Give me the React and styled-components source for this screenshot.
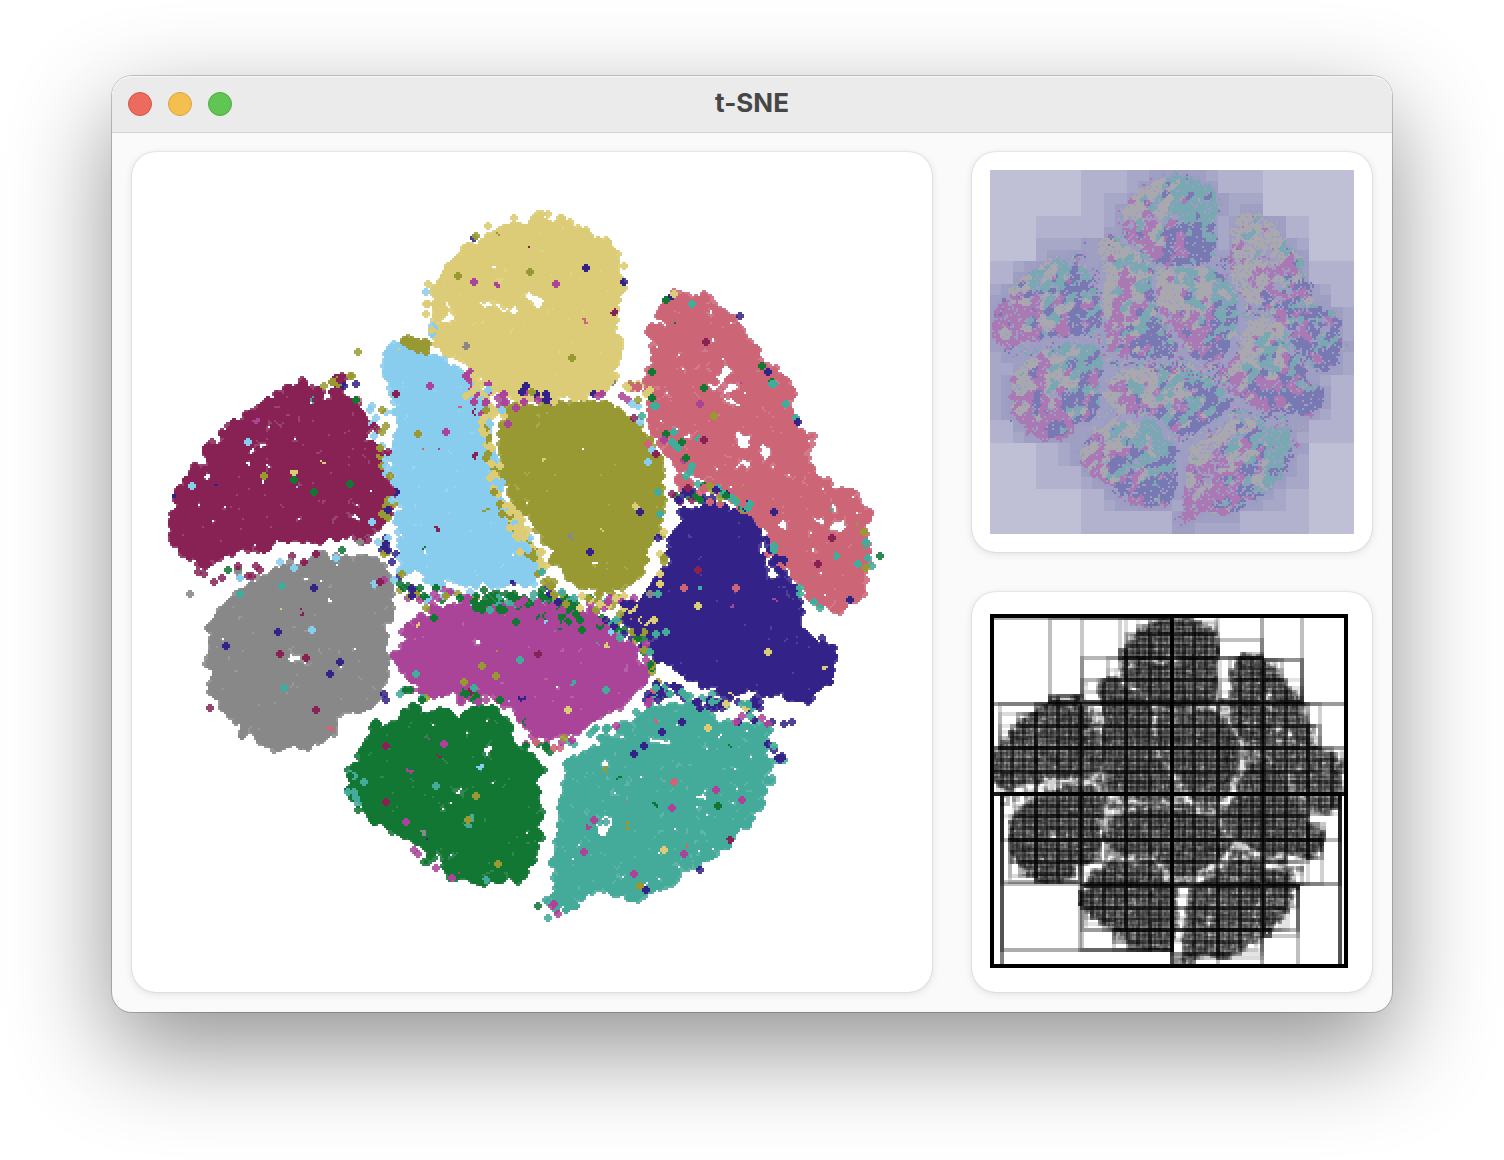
import React from "react";
import styled, { createGlobalStyle } from "styled-components";

/* ---------- data ---------- */

const COLORS = {
  sand: "#ddcc77",
  sky: "#88ccee",
  olive: "#999933",
  rose: "#cc6677",
  wine: "#882255",
  grey: "#888888",
  purple: "#aa4499",
  green: "#117733",
  indigo: "#332288",
  teal: "#44aa99",
};
const SOFT = {
  sand: "#e1d183",
  sky: "#99d3f0",
  olive: "#a8a850",
  rose: "#d27a89",
  wine: "#984370",
  grey: "#979797",
  purple: "#b55fa7",
  green: "#308850",
  indigo: "#4f4098",
  teal: "#5bb4a5",
};

// Cluster outlines, samples per square unit, and sparse spots [x, y, rx, ry].
const CLUSTERS = [
  { name: "grey", density: 0.14, outline: [[212, 620], [240, 590], [260, 575], [300, 566], [335, 552], [370, 560], [392, 575], [392, 610], [384, 640], [384, 690], [365, 708], [345, 715], [330, 740], [290, 752], [260, 742], [228, 720], [212, 690], [208, 650]], holes: [[296, 663, 10, 1]] },
  { name: "wine", density: 0.12, outline: [[170, 525], [178, 490], [205, 455], [235, 420], [270, 400], [300, 382], [320, 393], [335, 395], [338, 375], [344, 375], [345, 395], [360, 405], [368, 440], [385, 465], [397, 495], [388, 510], [380, 528], [360, 538], [330, 543], [310, 540], [270, 548], [240, 548], [215, 558], [205, 572], [185, 563], [172, 545]], holes: [[208, 463, 3, 2], [260, 447, 3, 1]] },
  { name: "olive", density: 0.14, outline: [[500, 408], [540, 402], [580, 404], [610, 402], [640, 430], [655, 450], [662, 480], [660, 520], [650, 560], [630, 585], [605, 592], [575, 582], [552, 560], [545, 530], [520, 510], [500, 480], [500, 440]], holes: [] },
  { name: "sand", density: 0.14, outline: [[448, 264], [462, 250], [490, 234], [508, 222], [540, 216], [565, 220], [580, 230], [610, 247], [620, 267], [622, 300], [618, 335], [622, 350], [612, 365], [616, 380], [598, 392], [570, 396], [535, 400], [500, 396], [485, 380], [470, 363], [445, 353], [432, 330], [436, 300]], holes: [[502, 306, 18, 1], [536, 300, 5, 2], [449, 305, 1, 5], [452, 316, 3, 2]] },
  { name: "sky", density: 0.14, outline: [[385, 362], [398, 346], [420, 348], [445, 368], [470, 370], [482, 400], [488, 420], [492, 470], [502, 500], [520, 530], [536, 560], [540, 580], [510, 586], [470, 584], [425, 580], [402, 570], [398, 540], [400, 500], [397, 450], [392, 400]], holes: [] },
  { name: "teal", density: 0.105, outline: [[567, 760], [610, 740], [640, 715], [670, 705], [700, 705], [725, 722], [765, 725], [772, 770], [760, 810], [730, 840], [700, 862], [670, 880], [640, 896], [600, 892], [575, 908], [552, 912], [550, 890], [558, 850], [564, 800]], holes: [[606, 766, 4, 2], [602, 815, 7, 1], [606, 828, 6, 1], [660, 742, 9, 1]] },
  { name: "green", density: 0.125, outline: [[345, 770], [380, 725], [410, 710], [450, 712], [485, 705], [505, 715], [518, 745], [542, 765], [543, 800], [538, 840], [525, 872], [495, 886], [455, 875], [435, 853], [405, 843], [375, 820], [358, 800]], holes: [[488, 745, 1, 4], [460, 790, 2, 1]] },
  { name: "purple", density: 0.14, outline: [[395, 655], [405, 635], [425, 612], [460, 604], [500, 605], [560, 608], [600, 622], [635, 645], [648, 672], [638, 690], [610, 712], [580, 730], [555, 738], [530, 728], [510, 705], [480, 695], [460, 698], [425, 688], [402, 675]], holes: [] },
  { name: "indigo", density: 0.14, outline: [[680, 515], [715, 502], [745, 515], [758, 540], [768, 575], [790, 597], [800, 627], [820, 637], [838, 650], [834, 685], [810, 702], [770, 698], [725, 690], [690, 680], [660, 660], [640, 630], [622, 618], [645, 595], [665, 570], [672, 545]], holes: [] },
  { name: "rose", density: 0.108, outline: [[672, 295], [680, 288], [705, 295], [730, 315], [752, 345], [775, 365], [793, 395], [800, 430], [812, 435], [805, 465], [822, 484], [850, 488], [866, 505], [869, 540], [866, 580], [850, 605], [832, 617], [818, 605], [800, 585], [785, 560], [765, 535], [745, 510], [722, 490], [700, 478], [680, 470], [658, 440], [648, 410], [645, 370], [652, 330]], holes: [[723, 372, 4, 9], [738, 390, 7, 2], [712, 384, 6, 1], [766, 451, 2, 7], [741, 438, 1, 7], [730, 404, 2, 2], [744, 464, 7, 1], [824, 520, 4, 3], [833, 505, 1, 6], [840, 526, 4, 2], [788, 475, 5, 1], [782, 523, 3, 3]] },
];

// Loose points along the gaps: [x1, y1, x2, y2, count, spread, colours]
const STRAYS = [
  [405, 340, 430, 348, 40, 5, ["olive"]],
  [428, 285, 426, 320, 5, 3, ["sand", "sky"]],
  [430, 325, 440, 345, 10, 6, ["sand", "sky"]],
  [470, 375, 500, 420, 50, 12, ["sand", "sand", "purple", "sky", "sand"]],
  [500, 400, 625, 395, 24, 8, ["purple", "olive", "sand", "purple", "indigo"]],
  [482, 410, 500, 510, 50, 6, ["sand", "sky", "olive", "sand"]],
  [505, 505, 545, 575, 65, 8, ["sand", "sky", "olive", "sand"]],
  [626, 385, 648, 392, 14, 5, ["rose", "sand", "rose", "olive"]],
  [634, 402, 655, 470, 14, 9, ["rose", "sky", "wine", "olive", "teal"]],
  [312, 386, 358, 378, 10, 6, ["olive", "indigo", "olive"]],
  [356, 394, 358, 402, 3, 2, ["green", "rose"]],
  [375, 400, 388, 480, 22, 8, ["sky", "sky", "wine", "olive"]],
  [392, 470, 386, 555, 18, 8, ["olive", "sky", "wine", "indigo", "olive"]],
  [210, 578, 370, 548, 22, 10, ["wine", "grey", "wine", "green", "sky"]],
  [372, 540, 400, 560, 7, 7, ["indigo", "olive", "sky"]],
  [395, 580, 430, 600, 26, 12, ["indigo", "sky", "olive", "green", "purple"]],
  [430, 592, 480, 600, 26, 8, ["green", "olive", "sky", "purple"]],
  [480, 602, 580, 602, 80, 10, ["green", "green", "green", "teal", "green"]],
  [510, 612, 600, 622, 60, 12, ["purple", "green", "purple", "purple"]],
  [545, 575, 560, 605, 16, 9, ["purple", "indigo", "olive", "sand", "teal"]],
  [580, 602, 630, 602, 34, 8, ["sand", "sand", "olive", "teal", "purple"]],
  [600, 615, 640, 645, 18, 8, ["green", "olive", "teal", "indigo"]],
  [640, 640, 665, 690, 18, 8, ["teal", "indigo", "olive", "green", "purple"]],
  [655, 630, 625, 605, 12, 6, ["indigo", "indigo", "sand"]],
  [395, 685, 425, 700, 9, 6, ["teal", "olive", "green", "purple"]],
  [455, 692, 510, 704, 9, 6, ["green", "green", "green", "purple"]],
  [515, 738, 560, 748, 12, 7, ["green", "purple", "rose", "green", "green"]],
  [555, 748, 650, 715, 18, 9, ["olive", "teal", "purple", "teal", "teal"]],
  [640, 705, 665, 690, 12, 7, ["purple", "rose", "teal", "indigo"]],
  [650, 685, 730, 706, 34, 7, ["indigo", "indigo", "indigo", "teal"]],
  [705, 702, 770, 706, 30, 7, ["indigo", "teal", "sand", "indigo"]],
  [735, 718, 790, 726, 10, 6, ["indigo", "purple", "teal"]],
  [765, 735, 783, 765, 9, 6, ["indigo", "indigo", "teal"]],
  [680, 480, 690, 488, 25, 5, ["rose"]],
  [670, 492, 720, 500, 22, 8, ["indigo", "rose", "wine", "indigo", "green"]],
  [700, 485, 755, 510, 30, 7, ["teal", "olive", "green", "rose", "indigo"]],
  [650, 395, 695, 480, 16, 8, ["teal", "green", "purple", "teal"]],
  [764, 535, 785, 578, 24, 6, ["indigo", "teal", "indigo", "indigo", "rose"]],
  [780, 575, 800, 600, 18, 5, ["indigo"]],
  [795, 590, 825, 610, 4, 3, ["teal"]],
  [668, 298, 676, 292, 3, 2, ["indigo", "green", "sand"]],
  [752, 348, 806, 435, 8, 3, ["indigo", "teal", "green"]],
  [862, 500, 872, 590, 10, 4, ["rose", "olive", "grey", "teal"]],
  [663, 490, 660, 600, 12, 6, ["olive", "indigo", "teal", "sand"]],
  [345, 760, 362, 815, 6, 4, ["green", "teal"]],
  [410, 850, 450, 880, 5, 3, ["green", "purple"]],
  [545, 900, 560, 912, 8, 4, ["teal", "purple"]],
];

// Single points: [x, y, colour]
const SINGLES = [
  [740, 315, "indigo"], [879, 556, "green"], [190, 593, "grey"], [358, 352, "olive"],
  [782, 758, "indigo"], [792, 721, "indigo"], [209, 708, "wine"], [347, 792, "teal"],
  [357, 809, "green"], [538, 905, "green"], [548, 917, "teal"], [228, 570, "green"],
  [191, 485, "sky"], [247, 441, "sky"], [350, 483, "green"], [313, 492, "green"],
  [293, 480, "green"], [371, 522, "sky"], [473, 238, "indigo"], [475, 236, "olive"],
  [457, 275, "olive"], [473, 282, "purple"], [586, 267, "indigo"], [555, 284, "purple"],
  [624, 281, "indigo"], [525, 386, "indigo"], [571, 358, "olive"], [640, 511, "indigo"],
  [589, 552, "indigo"], [417, 433, "olive"], [445, 432, "purple"], [395, 393, "wine"],
  [429, 386, "purple"], [706, 341, "wine"], [703, 439, "wine"], [700, 403, "purple"],
  [714, 415, "olive"], [704, 387, "green"], [652, 372, "green"], [692, 303, "teal"],
  [818, 564, "wine"], [832, 538, "wine"], [850, 599, "indigo"], [774, 511, "indigo"],
  [857, 564, "teal"], [697, 569, "wine"], [684, 587, "rose"], [736, 587, "rose"],
  [698, 605, "sand"], [650, 594, "grey"], [656, 633, "teal"], [666, 632, "teal"],
  [313, 588, "indigo"], [278, 632, "indigo"], [280, 653, "wine"], [306, 657, "wine"],
  [340, 662, "indigo"], [330, 673, "indigo"], [311, 630, "sky"], [315, 709, "wine"],
  [380, 582, "wine"], [567, 709, "sand"], [519, 660, "teal"], [415, 674, "teal"],
  [434, 618, "green"], [474, 688, "teal"], [496, 675, "olive"], [605, 690, "teal"],
  [386, 746, "wine"], [443, 744, "purple"], [436, 786, "teal"], [418, 853, "purple"],
  [497, 864, "olive"], [476, 796, "olive"], [406, 822, "purple"], [385, 802, "wine"],
  [634, 753, "indigo"], [662, 731, "indigo"], [717, 806, "green"], [672, 808, "purple"],
  [716, 790, "purple"], [674, 782, "rose"], [663, 850, "sand"], [633, 873, "purple"],
  [645, 890, "indigo"], [700, 870, "indigo"], [593, 820, "purple"], [742, 800, "purple"],
  [644, 745, "indigo"], [682, 722, "indigo"], [708, 728, "sand"], [584, 852, "purple"],
  [684, 854, "purple"], [639, 886, "olive"], [383, 694, "indigo"], [386, 700, "indigo"],
  [537, 214, "sand"], [547, 214, "sand"], [562, 217, "sand"], [488, 226, "sand"],
  [608, 244, "sand"], [624, 265, "sand"], [427, 284, "sand"], [513, 218, "sand"],
  [341, 376, "wine"], [339, 380, "wine"], [204, 574, "wine"], [198, 571, "wine"],
];

function createRandom(seed) {
  let s = seed;
  return () => {
    s = (s + 0x6d2b79f5) | 0;
    let t = Math.imul(s ^ (s >>> 15), 1 | s);
    t = (t + Math.imul(t ^ (t >>> 7), 61 | t)) ^ t;
    return ((t ^ (t >>> 14)) >>> 0) / 4294967296;
  };
}

function lattice(ix, iy, salt) {
  let n = (ix * 374761393 + iy * 668265263 + salt * 974634777) | 0;
  n = Math.imul(n ^ (n >>> 13), 1274126177);
  return (((n ^ (n >>> 16)) >>> 0) / 4294967296) * 2 - 1;
}

function noise(x, y, salt) {
  const ix = Math.floor(x);
  const iy = Math.floor(y);
  const fx = x - ix;
  const fy = y - iy;
  const mix = (a, b, t) => a + (b - a) * t * t * (3 - 2 * t);
  return mix(
    mix(lattice(ix, iy, salt), lattice(ix + 1, iy, salt), fx),
    mix(lattice(ix, iy + 1, salt), lattice(ix + 1, iy + 1, salt), fx),
    fy
  );
}

function insidePolygon(x, y, polygon) {
  let inside = false;
  for (let i = 0, j = polygon.length - 1; i < polygon.length; j = i++) {
    const [xi, yi] = polygon[i];
    const [xj, yj] = polygon[j];
    if (yi > y !== yj > y && x < ((xj - xi) * (y - yi)) / (yj - yi) + xi) {
      inside = !inside;
    }
  }
  return inside;
}

function buildPoints() {
  const random = createRandom(20);
  const gauss = () => random() + random() + random() - 1.5;
  const points = [];
  const names = Object.keys(COLORS);

  CLUSTERS.forEach(({ name, density, outline, holes }) => {
    const xs = outline.map((p) => p[0]);
    const ys = outline.map((p) => p[1]);
    const left = Math.min(...xs);
    const top = Math.min(...ys);
    const w = Math.max(...xs) - left;
    const h = Math.max(...ys) - top;
    const total = Math.round(w * h * density);
    for (let i = 0; i < total; i++) {
      const x = left + random() * w;
      const y = top + random() * h;
      const bentX = x + noise(x / 11, y / 11, 5) * 6;
      const bentY = y + noise(x / 11, y / 11, 6) * 6;
      if (!insidePolygon(bentX, bentY, outline)) continue;
      const sparse = holes.some(
        ([hx, hy, rx, ry]) =>
          ((bentX - hx) / (rx + 4)) ** 2 + ((bentY - hy) / (ry + 4)) ** 2 < 1
      );
      if (sparse) continue;
      const jitter = random() < 0.02 ? 7 : 2;
      points.push({
        x: x + gauss() * jitter,
        y: y + gauss() * jitter,
        color: name,
        u: (x - left) / w - 0.5,
        v: (y - top) / h - 0.5,
      });
      if (random() < 0.008) {
        const other = names[Math.floor(random() * names.length)];
        points.push({ x, y, color: other, u: 0, v: 0 });
      }
    }
  });

  STRAYS.forEach(([x1, y1, x2, y2, count, spread, colors]) => {
    for (let i = 0; i < count; i++) {
      const t = random();
      points.push({
        x: x1 + (x2 - x1) * t + gauss() * spread,
        y: y1 + (y2 - y1) * t + gauss() * spread,
        color: colors[Math.floor(random() * colors.length)],
        u: random() - 0.5,
        v: random() - 0.5,
      });
    }
  });

  SINGLES.forEach(([x, y, color]) => points.push({ x, y, color, u: 0, v: 0 }));
  return points;
}

/* ---------- drawing helpers ---------- */

// Turns a grid of fill values into one path of horizontal runs per fill.
function gridToPaths(grid, width, height) {
  const paths = new Map();
  for (let y = 0; y < height; y++) {
    let x = 0;
    while (x < width) {
      const fill = grid[y * width + x];
      let end = x + 1;
      while (end < width && grid[y * width + end] === fill) end++;
      if (fill) {
        if (!paths.has(fill)) paths.set(fill, []);
        paths.get(fill).push(`M${x} ${y}h${end - x}v1h${x - end}z`);
      }
      x = end;
    }
  }
  return [...paths].map(([fill, parts]) => ({ fill, d: parts.join("") }));
}

function scatterPaths(points) {
  const width = 400;
  const height = 420;
  const grid = new Array(width * height);
  points.forEach(({ x, y, color }) => {
    const cx = Math.round((x - 132) / 2) - 2;
    const cy = Math.round((y - 152) / 2) - 2;
    for (let j = 0; j < 4; j++) {
      for (let i = 0; i < 4; i++) {
        if ((i === 0 || i === 3) && (j === 0 || j === 3)) continue;
        const k = (cy + j) * width + cx + i;
        grid[k] = grid[k] ? COLORS[color] : SOFT[color];
      }
    }
  });
  return gridToPaths(grid, width, height);
}

const toPanel = (p) => ({ x: p.x / 4 - 32.75, y: p.y / 4 - 43 });

const ORIGIN = 9;
const EXTENT = 182;
const LEVEL_FILLS = { 3: "#b2b2ce", 4: "#a7a7c7", 5: "#9f9fc3", 6: "#9d9dc3" };

function quadLevels(points) {
  return Object.entries(LEVEL_FILLS).map(([level, fill]) => {
    const n = 2 ** Number(level);
    const size = EXTENT / n;
    const seen = new Set();
    points.forEach((p) => {
      const q = toPanel(p);
      const cx = Math.floor((q.x - ORIGIN) / size);
      const cy = Math.floor((q.y - ORIGIN) / size);
      if (cx >= 0 && cy >= 0 && cx < n && cy < n) seen.add(cy * n + cx);
    });
    const d = [...seen]
      .map((key) => {
        const x = ORIGIN + (key % n) * size;
        const y = ORIGIN + Math.floor(key / n) * size;
        return `M${x} ${y}h${size}v${size}h${-size}z`;
      })
      .join("");
    return { fill, d };
  });
}

function forcePaths(points) {
  const width = 200;
  const grid = new Array(width * width);
  points.forEach((p) => {
    const q = toPanel(p);
    const along = (p.x - p.y) / 26;
    const across = (p.x + p.y) / 18;
    const east = p.u * 2 + noise(along, across, 1) * 1.1 > 0.05;
    const south = p.v * 1.7 + noise(along, across, 2) * 1.1 > 0.05;
    const fill = south
      ? east ? "#7878b2" : "#aa78b2"
      : east ? "#7aa8b2" : "#a8a8ae";
    grid[Math.floor(q.y) * width + Math.floor(q.x)] = fill;
  });
  return gridToPaths(grid, width, width);
}

// Binary space partition drawn as tight bounding boxes, fading with depth.
function boundsPaths(points) {
  const width = 200;
  const ink = new Float32Array(width * width).fill(1);
  const paint = (x, y, alpha) => {
    if (x >= 0 && y >= 0 && x < width && y < width) {
      ink[y * width + x] *= 1 - alpha;
    }
  };
  const strokeBox = (x0, y0, x1, y1, alpha) => {
    for (let y = y0 - 1; y <= y1; y++) {
      for (let x = x0 - 1; x <= x1; x++) {
        const edge = x <= x0 || x >= x1 - 1 || y <= y0 || y >= y1 - 1;
        if (edge) paint(x, y, alpha);
      }
    }
  };
  const visit = (items, depth, x, y, w, h) => {
    if (!items.length) return;
    let x0 = Infinity, y0 = Infinity, x1 = -Infinity, y1 = -Infinity;
    items.forEach((p) => {
      x0 = Math.min(x0, p.x);
      x1 = Math.max(x1, p.x);
      y0 = Math.min(y0, p.y);
      y1 = Math.max(y1, p.y);
    });
    strokeBox(Math.round(x0), Math.round(y0), Math.round(x1), Math.round(y1), 1 / (depth + 1));
    if (depth >= 15 || items.length < 2) return;
    if (depth % 2 === 0) {
      const mid = y + h / 2;
      visit(items.filter((p) => p.y < mid), depth + 1, x, y, w, h / 2);
      visit(items.filter((p) => p.y >= mid), depth + 1, x, mid, w, h / 2);
    } else {
      const mid = x + w / 2;
      visit(items.filter((p) => p.x < mid), depth + 1, x, y, w / 2, h);
      visit(items.filter((p) => p.x >= mid), depth + 1, mid, y, w / 2, h);
    }
  };
  const items = points.map((p) => {
    const q = toPanel(p);
    return { x: q.x, y: q.y + 1 };
  });
  visit(items, 0, ORIGIN, ORIGIN + 1, EXTENT, EXTENT);

  const grid = new Array(width * width);
  ink.forEach((value, k) => {
    if (value > 0.98) return;
    const shade = Math.round((Math.round(value * 28) / 28) * 255);
    grid[k] = `rgb(${shade},${shade},${shade})`;
  });
  return gridToPaths(grid, width, width);
}

const POINTS = buildPoints();
const SCATTER = scatterPaths(POINTS);
const QUAD_LEVELS = quadLevels(POINTS);
const FORCES = forcePaths(POINTS);
const BOUNDS = boundsPaths(POINTS);

/* ---------- layout ---------- */

const GlobalStyle = createGlobalStyle`
  * { box-sizing: border-box; }
  body {
    margin: 0;
    background: #ffffff;
    font-family: Inter, "Liberation Sans", sans-serif;
  }
`;

const Desktop = styled.div`
  padding: 76px 112px 148px;
  overflow: hidden;
`;

const Window = styled.main`
  border-radius: 20px;
  background: #fafafa;
  box-shadow:
    0 0 0 1px rgba(0, 0, 0, 0.2),
    0 36px 100px rgba(0, 0, 0, 0.44);
`;

const TitleBar = styled.header`
  display: grid;
  grid-template-columns: 1fr auto 1fr;
  align-items: center;
  height: 57px;
  padding: 0 16px;
  border-radius: 20px 20px 0 0;
  border-bottom: 1px solid #d2d2d2;
  background: #ebebeb;
  box-shadow: inset 0 1px 0 #f8f8f8;
`;

const Controls = styled.div`
  display: flex;
  gap: 16px;
`;

const ControlButton = styled.button`
  width: 24px;
  height: 24px;
  padding: 0;
  border: 1px solid ${(p) => p.$edge};
  border-radius: 50%;
  background: ${(p) => p.$fill};
`;

const Title = styled.h1`
  margin: 0;
  padding-bottom: 2px;
  color: #464646;
  font-size: 26px;
  font-weight: 700;
  line-height: 32px;
`;

const Panels = styled.div`
  display: grid;
  grid-template-columns: 2fr 1fr;
  gap: 40px;
  padding: 19px 20px 20px;
`;

const SideColumn = styled.div`
  display: grid;
  gap: 40px;
`;

const Card = styled.section`
  overflow: hidden;
  border-radius: 24px;
  background: #ffffff;
  box-shadow:
    0 0 2px rgba(0, 0, 0, 0.2),
    0 2px 8px rgba(0, 0, 0, 0.1);
`;

const Plot = styled.svg`
  display: block;
  width: 100%;
  height: auto;
`;

function Layers({ layers }) {
  return layers.map(({ fill, d }) => <path key={fill} fill={fill} d={d} />);
}

export default function App() {
  return (
    <Desktop>
      <GlobalStyle />
      <Window>
        <TitleBar>
          <Controls>
            <ControlButton type="button" aria-label="Close" $fill="#ec6a5e" $edge="#d5554b" />
            <ControlButton type="button" aria-label="Minimize" $fill="#f4bf4f" $edge="#d9a440" />
            <ControlButton type="button" aria-label="Zoom" $fill="#61c554" $edge="#50a945" />
          </Controls>
          <Title>t-SNE</Title>
        </TitleBar>
        <Panels>
          <Card>
            <Plot viewBox="0 0 400 420" shapeRendering="crispEdges" role="img" aria-label="Embedding">
              <Layers layers={SCATTER} />
            </Plot>
          </Card>
          <SideColumn>
            <Card>
              <Plot viewBox="0 0 200 200" shapeRendering="crispEdges" role="img" aria-label="Quadtree">
                <rect x={ORIGIN} y={ORIGIN} width={EXTENT} height={EXTENT} fill="#bfbfd6" />
                <Layers layers={QUAD_LEVELS} />
                <Layers layers={FORCES} />
              </Plot>
            </Card>
            <Card>
              <Plot viewBox="0 0 200 200" shapeRendering="crispEdges" role="img" aria-label="Bounding boxes">
                <Layers layers={BOUNDS} />
              </Plot>
            </Card>
          </SideColumn>
        </Panels>
      </Window>
    </Desktop>
  );
}
